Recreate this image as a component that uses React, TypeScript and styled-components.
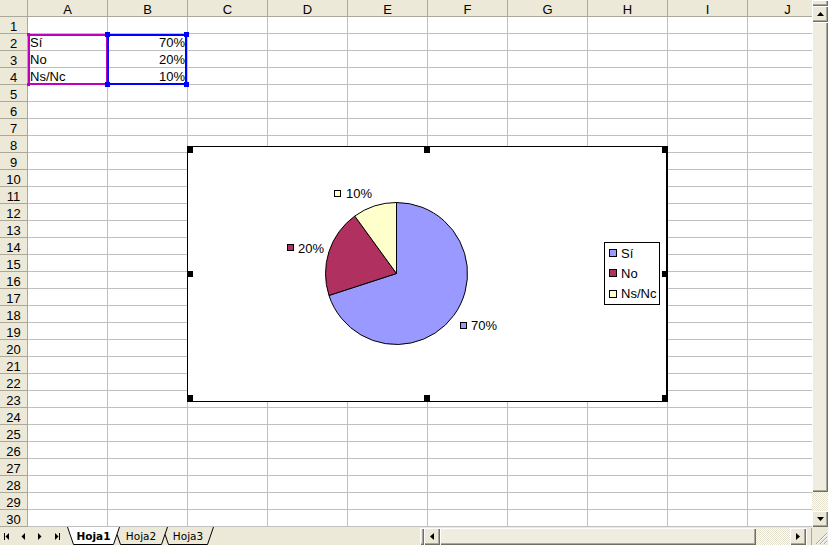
import React from 'react';
import styled, { createGlobalStyle, css } from 'styled-components';

const COLS = ['A', 'B', 'C', 'D', 'E', 'F', 'G', 'H', 'I', 'J'];
const ROWS = Array.from({ length: 30 }, (_, i) => i + 1);

type Align = 'left' | 'right';

const CELLS: Record<string, { text: string; align?: Align }> = {
  A2: { text: 'Sí' },
  A3: { text: 'No' },
  A4: { text: 'Ns/Nc' },
  B2: { text: '70%', align: 'right' },
  B3: { text: '20%', align: 'right' },
  B4: { text: '10%', align: 'right' },
};

// label key position + text baseline, in chart inner coordinates
const SERIES = [
  { label: 'Sí', value: 70, color: '#9999FF', key: [272, 175], text: [283, 183] },
  { label: 'No', value: 20, color: '#B03060', key: [99, 97], text: [110, 106] },
  { label: 'Ns/Nc', value: 10, color: '#FFFFCC', key: [146, 43], text: [158, 51] },
];

const CX = 208.5;
const CY = 126.5;
const R = 71;

const point = (deg: number) => {
  const a = (deg * Math.PI) / 180;
  return [CX + R * Math.sin(a), CY - R * Math.cos(a)];
};

let acc = 0;
const SLICES = SERIES.map((s) => {
  const sweep = (s.value / 100) * 360;
  const [x1, y1] = point(acc);
  const [x2, y2] = point(acc + sweep);
  acc += sweep;
  const large = sweep > 180 ? 1 : 0;
  return { ...s, d: `M${CX} ${CY} L${x1} ${y1} A${R} ${R} 0 ${large} 1 ${x2} ${y2} Z` };
});

const TABS = [
  { label: 'Hoja1', width: 53, active: true },
  { label: 'Hoja2', width: 54, active: false },
  { label: 'Hoja3', width: 52, active: false },
];

const GlobalStyle = createGlobalStyle`
  html, body {
    margin: 0;
    padding: 0;
    background: #ECE9D8;
  }
  body {
    font-family: "Liberation Sans", Arial, sans-serif;
  }
`;

const raised = css`
  background: #ECE9D8;
  box-shadow: inset 1px 1px #fff, inset -1px -1px #716F64, inset -2px -2px #ACA899;
`;

const hatch = css`
  background: repeating-conic-gradient(#fff 0 25%, #E4E1CE 0 50%) 0 0 / 2px 2px;
`;

const Window = styled.div`
  width: 828px;
  height: 545px;
  display: flex;
  flex-direction: column;
  overflow: hidden;
  background: #ECE9D8;
`;

const SheetArea = styled.div`
  display: flex;
  height: 527px;
`;

const GridWrap = styled.div`
  position: relative;
  width: 812px;
  overflow: hidden;
  background: #fff;
`;

const Grid = styled.div`
  display: grid;
  grid-template-columns: 28px repeat(10, 80px);
  grid-auto-rows: 17px;
  width: 828px;
  font-size: 13px;
  color: #000;
`;

const HeaderCell = styled.div`
  box-sizing: border-box;
  display: flex;
  align-items: center;
  justify-content: center;
  padding-top: 2px;
  background: #ECE9D8;
  border-right: 1px solid #ACA899;
  border-bottom: 1px solid #ACA899;
  font-size: 13px;
  line-height: 15px;
`;

const Cell = styled.div<{ $align?: Align }>`
  box-sizing: border-box;
  border-right: 1px solid #C0C0C0;
  border-bottom: 1px solid #C0C0C0;
  padding: 1px 2px 0;
  line-height: 16px;
  white-space: nowrap;
  overflow: hidden;
  text-align: ${({ $align }) => $align ?? 'left'};
`;

const Range = styled.div<{ $color: string; $left: number }>`
  position: absolute;
  top: 34px;
  left: ${({ $left }) => $left}px;
  width: 80px;
  height: 51px;
  box-sizing: border-box;
  border: 2px solid ${({ $color }) => $color};
  pointer-events: none;
`;

const RangeHandle = styled.span<{ $color: string; $size: number; $v: 'top' | 'bottom'; $h: 'left' | 'right' }>`
  position: absolute;
  width: ${({ $size }) => $size}px;
  height: ${({ $size }) => $size}px;
  background: ${({ $color }) => $color};
  ${({ $v, $size }) => `${$v}: ${-Math.ceil($size / 2) - 1}px;`}
  ${({ $h, $size }) => `${$h}: ${-Math.ceil($size / 2) - 1}px;`}
`;

const Chart = styled.div`
  position: absolute;
  left: 187px;
  top: 146px;
  width: 481px;
  height: 256px;
  box-sizing: border-box;
  background: #fff;
  border: 1px solid #000;
  border-right-width: 2px;
`;

const Plot = styled.svg`
  position: absolute;
  inset: 0;
  width: 100%;
  height: 100%;
  font-family: "Liberation Sans", Arial, sans-serif;
  font-size: 13px;
`;

const ChartHandle = styled.span<{ $h: 'l' | 'c' | 'r'; $v: 't' | 'm' | 'b' }>`
  position: absolute;
  width: 6px;
  height: 6px;
  background: #000;
  ${({ $h }) => ($h === 'l' ? 'left: -1px;' : $h === 'r' ? 'right: -2px;' : 'left: calc(50% - 3px);')}
  ${({ $v }) => ($v === 't' ? 'top: 0;' : $v === 'b' ? 'bottom: 0;' : 'top: calc(50% - 3px);')}
`;

const Legend = styled.div`
  position: absolute;
  left: 416px;
  top: 95px;
  width: 56px;
  height: 63px;
  box-sizing: border-box;
  border: 1px solid #000;
  background: #fff;
  padding-left: 4px;
  display: flex;
  flex-direction: column;
`;

const LegendRow = styled.div`
  height: 21px;
  display: flex;
  align-items: center;
  gap: 4px;
  font-size: 13px;
`;

const Swatch = styled.span<{ $color: string }>`
  width: 6px;
  height: 6px;
  border: 1px solid #000;
  background: ${({ $color }) => $color};
`;

const VScroll = styled.div`
  width: 16px;
  display: flex;
  flex-direction: column;
  background: #ECE9D8;
`;

const SplitBox = styled.div<{ $dir: 'h' | 'v' }>`
  ${raised};
  flex-shrink: 0;
  ${({ $dir }) => ($dir === 'v' ? 'height: 6px;' : 'width: 4px;')}
`;

const ArrowButton = styled.div<{ $w?: number; $h?: number }>`
  ${raised};
  width: ${({ $w }) => $w ?? 16}px;
  height: ${({ $h }) => $h ?? 16}px;
  flex-shrink: 0;
  display: flex;
  align-items: center;
  justify-content: center;
`;

const Thumb = styled.div<{ $size: number; $dir: 'h' | 'v' }>`
  ${raised};
  background: #EFEDE0;
  flex-shrink: 0;
  ${({ $dir, $size }) => ($dir === 'v' ? `height: ${$size}px;` : `width: ${$size}px;`)}
`;

const Track = styled.div<{ $size?: number }>`
  ${hatch};
  ${({ $size }) => ($size ? `width: ${$size}px; flex-shrink: 0;` : 'flex: 1;')}
`;

const BottomBar = styled.div`
  height: 18px;
  display: flex;
  background: #ECE9D8;
`;

const NavGroup = styled.div`
  display: flex;
  width: 67px;
  flex-shrink: 0;
`;

const NavButton = styled.div<{ $w: number }>`
  width: ${({ $w }) => $w}px;
  display: flex;
  align-items: center;
  justify-content: center;
`;

const TabStrip = styled.div`
  display: flex;
  height: 18px;
  flex-shrink: 0;
`;

const Tab = styled.div<{ $w: number; $active: boolean; $z: number }>`
  position: relative;
  width: ${({ $w }) => $w}px;
  height: 18px;
  z-index: ${({ $z }) => $z};
  display: flex;
  align-items: center;
  justify-content: center;
  font-family: "DejaVu Sans", Tahoma, sans-serif;
  font-size: 10.5px;
  font-weight: ${({ $active }) => ($active ? 700 : 400)};
  color: #000;

  & + & {
    margin-left: -6px;
  }

  svg {
    position: absolute;
    inset: 0;
  }

  span {
    position: relative;
    margin-top: -1px;
  }
`;

const Spacer = styled.div`
  flex: 1;
`;

const HScroll = styled.div`
  display: flex;
  height: 18px;
  padding-top: 1px;
  box-sizing: border-box;
  flex-shrink: 0;
`;

const Gap = styled.div`
  width: 6px;
  box-shadow: inset 1px 0 #fff, inset -1px 0 #ACA899;
`;

const Grip = styled.div`
  width: 16px;
  flex-shrink: 0;
  display: flex;
  align-items: flex-end;
  justify-content: flex-end;
`;

const Tri = ({ dir }: { dir: 'up' | 'down' | 'left' | 'right' }) => {
  const pts = {
    up: '0,4 7,4 3.5,0',
    down: '0,0 7,0 3.5,4',
    left: '4,0 4,7 0,3.5',
    right: '0,0 0,7 4,3.5',
  }[dir];
  const vertical = dir === 'up' || dir === 'down';
  return (
    <svg width={vertical ? 7 : 4} height={vertical ? 4 : 7}>
      <polygon points={pts} fill="#000" />
    </svg>
  );
};

const NavGlyph = ({ kind }: { kind: 'first' | 'prev' | 'next' | 'last' }) => (
  <svg width="6" height="7">
    {kind === 'first' && <rect x="0" y="0" width="1" height="7" fill="#000" />}
    {kind === 'last' && <rect x="5" y="0" width="1" height="7" fill="#000" />}
    {(kind === 'first' || kind === 'prev') && <polygon points="5,0 5,7 1.5,3.5" fill="#000" />}
    {(kind === 'next' || kind === 'last') && <polygon points="1,0 1,7 4.5,3.5" fill="#000" />}
  </svg>
);

const SheetTab = ({ label, width, active, z }: { label: string; width: number; active: boolean; z: number }) => (
  <Tab $w={width} $active={active} $z={z}>
    <svg width={width} height={18}>
      <polygon points={`0,0 6,17 ${width - 6},17 ${width},0`} fill={active ? '#fff' : '#ECE9D8'} />
      <polyline points={`0.5,0 6.5,17.5 ${width - 6.5},17.5 ${width - 0.5},0`} fill="none" stroke="#000" />
    </svg>
    <span>{label}</span>
  </Tab>
);

const App = () => {
  return (
    <>
      <GlobalStyle />
      <Window>
        <SheetArea>
          <GridWrap>
            <Grid>
              <HeaderCell />
              {COLS.map((c) => (
                <HeaderCell key={c}>{c}</HeaderCell>
              ))}
              {ROWS.map((r) => (
                <React.Fragment key={r}>
                  <HeaderCell>{r}</HeaderCell>
                  {COLS.map((c) => {
                    const cell = CELLS[`${c}${r}`];
                    return (
                      <Cell key={c} $align={cell?.align}>
                        {cell?.text}
                      </Cell>
                    );
                  })}
                </React.Fragment>
              ))}
            </Grid>

            <Range $color="#C000C0" $left={28}>
              <RangeHandle $color="#C000C0" $size={3} $v="top" $h="left" />
              <RangeHandle $color="#C000C0" $size={3} $v="bottom" $h="left" />
            </Range>
            <Range $color="#0000FF" $left={107}>
              <RangeHandle $color="#0000FF" $size={5} $v="top" $h="left" />
              <RangeHandle $color="#0000FF" $size={5} $v="top" $h="right" />
              <RangeHandle $color="#0000FF" $size={5} $v="bottom" $h="left" />
              <RangeHandle $color="#0000FF" $size={5} $v="bottom" $h="right" />
            </Range>

            <Chart>
              <Plot>
                {SLICES.map((s) => (
                  <path key={s.label} d={s.d} fill={s.color} stroke="#000" strokeWidth="1" />
                ))}
                {SLICES.map((s) => (
                  <g key={s.label}>
                    <rect x={s.key[0] + 0.5} y={s.key[1] + 0.5} width="6" height="6" fill={s.color} stroke="#000" />
                    <text x={s.text[0]} y={s.text[1]} fill="#000">
                      {s.value}%
                    </text>
                  </g>
                ))}
              </Plot>
              <Legend>
                {SERIES.map((s) => (
                  <LegendRow key={s.label}>
                    <Swatch $color={s.color} />
                    {s.label}
                  </LegendRow>
                ))}
              </Legend>
              <ChartHandle $h="l" $v="t" />
              <ChartHandle $h="c" $v="t" />
              <ChartHandle $h="r" $v="t" />
              <ChartHandle $h="l" $v="m" />
              <ChartHandle $h="r" $v="m" />
              <ChartHandle $h="l" $v="b" />
              <ChartHandle $h="c" $v="b" />
              <ChartHandle $h="r" $v="b" />
            </Chart>
          </GridWrap>

          <VScroll>
            <SplitBox $dir="v" />
            <ArrowButton>
              <Tri dir="up" />
            </ArrowButton>
            <Thumb $dir="v" $size={470} />
            <Track />
            <ArrowButton>
              <Tri dir="down" />
            </ArrowButton>
          </VScroll>
        </SheetArea>

        <BottomBar>
          <NavGroup>
            <NavButton $w={13}>
              <NavGlyph kind="first" />
            </NavButton>
            <NavButton $w={19}>
              <NavGlyph kind="prev" />
            </NavButton>
            <NavButton $w={15}>
              <NavGlyph kind="next" />
            </NavButton>
            <NavButton $w={20}>
              <NavGlyph kind="last" />
            </NavButton>
          </NavGroup>
          <TabStrip>
            {TABS.map((t, i) => (
              <SheetTab key={t.label} label={t.label} width={t.width} active={t.active} z={t.active ? 10 : 5 - i} />
            ))}
          </TabStrip>
          <Spacer />
          <HScroll>
            <SplitBox $dir="h" />
            <ArrowButton $h={17}>
              <Tri dir="left" />
            </ArrowButton>
            <Thumb $dir="h" $size={316} />
            <Track $size={34} />
            <ArrowButton $h={17}>
              <Tri dir="right" />
            </ArrowButton>
            <Gap />
          </HScroll>
          <Grip>
            <svg width="16" height="16">
              <path d="M15 4 L4 15 M15 8 L8 15 M15 12 L12 15" stroke="#ACA899" strokeWidth="1" />
              <path d="M15 5 L5 15 M15 9 L9 15 M15 13 L13 15" stroke="#fff" strokeWidth="1" />
            </svg>
          </Grip>
        </BottomBar>
      </Window>
    </>
  );
};

export default App;
